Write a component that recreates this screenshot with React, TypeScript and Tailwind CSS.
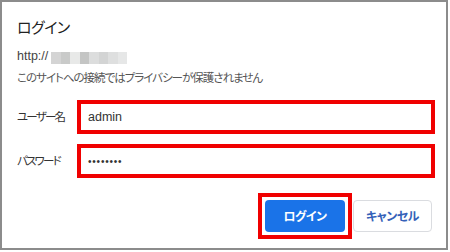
import React from 'react';

const JP = "font-['Noto_Sans_CJK_JP','Noto_Sans',sans-serif] [font-feature-settings:'palt']";

// mosaic used to hide the host name
const MOSAIC = ['#d4d4d4', '#c9cac9', '#e8e9e8', '#c4c5c4', '#dcdddd', '#d3d4d4', '#dedfdf', '#e6e7e7'];

export default function App() {
  return (
    <div className={`w-[450px] h-[252px] bg-white ${JP}`}>
      <div className="w-[448px] h-[250px] border-2 border-[#8c8c8c] bg-white flex flex-col pl-[15px] pr-[11px]">
        <h1 className="mt-[15px] text-[15px] leading-[20px] text-[#222] tracking-[-0.5px]">ログイン</h1>

        <div className="mt-[11px] h-[16px] flex items-center text-[12.5px] text-[#444]">
          <span className="font-['Liberation_Sans',sans-serif]">http://</span>
          <div className="flex h-[12px] mt-[3px] ml-[3px]">
            {MOSAIC.map((c, i) => (
              <div key={i} className="w-[9.5px] h-full" style={{ backgroundColor: c }} />
            ))}
          </div>
        </div>
        <p className="mt-[5px] text-[11.5px] leading-[16px] text-[#555] tracking-[-1px]">
          このサイトへの接続ではプライバシーが保護されません
        </p>

        <div className="mt-[15px] flex items-center">
          <label className="w-[60px] text-[11.5px] text-[#333] tracking-[-1.8px]">ユーザー名</label>
          <div className="flex-1 h-[34px] border-4 border-[#f00000] bg-white flex items-center pl-[7px] text-[12.5px] text-[#333] font-['Liberation_Sans',sans-serif]">
            admin
          </div>
        </div>

        <div className="mt-[10px] flex items-center">
          <label className="w-[60px] text-[11.5px] text-[#333] tracking-[-1.8px]">パスワード</label>
          <div className="flex-1 h-[34px] border-4 border-[#f00000] bg-white flex items-center pl-[7px] text-[10px] text-[#333] tracking-[0.8px] font-['Liberation_Sans',sans-serif]">
            ••••••••
          </div>
        </div>

        <div className="mt-[15px] mr-[3px] flex justify-end items-center">
          <div className="border-4 border-[#f00000] p-[3px]">
            <button className="w-[80px] h-[32px] rounded-[4px] bg-[#1a73e8] text-white text-[12px] font-bold tracking-[-0.5px]">
              ログイン
            </button>
          </div>
          <button className="ml-px w-[79px] h-[32px] rounded-[4px] border border-[#dadce0] bg-white text-[#3461b8] text-[12px] font-bold tracking-[-0.5px]">
            キャンセル
          </button>
        </div>
      </div>
    </div>
  );
}
